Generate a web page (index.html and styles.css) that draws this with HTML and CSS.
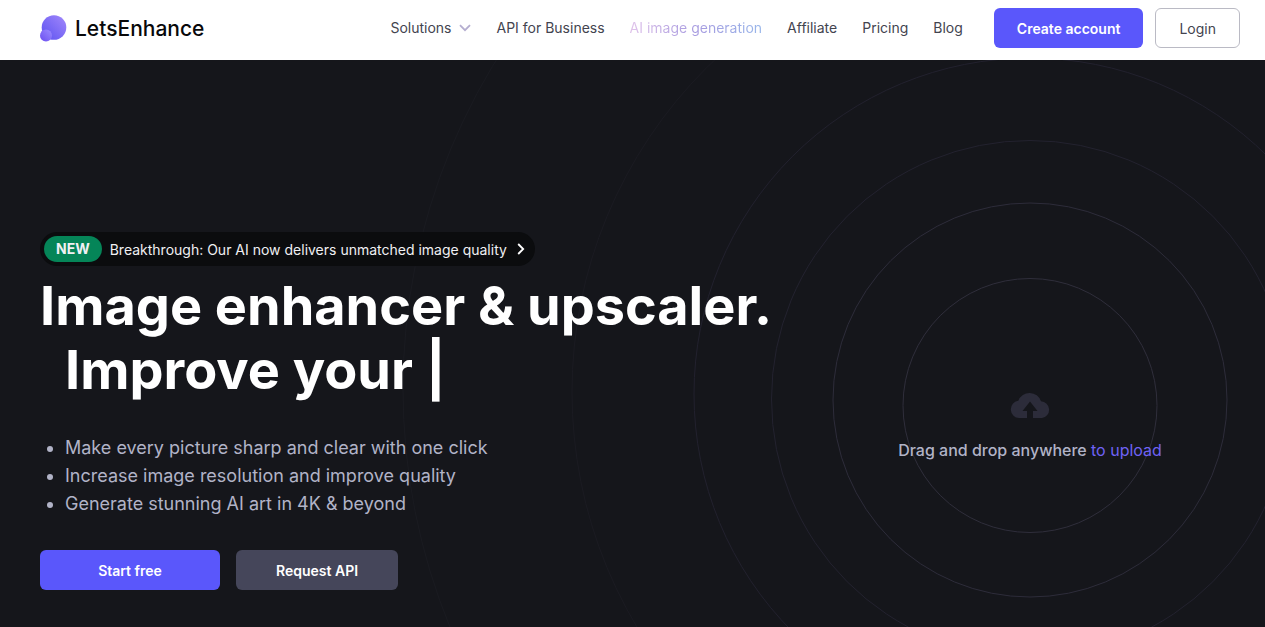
FILE: index.html
```
<!DOCTYPE html>
<html lang="en">
<head>
<meta charset="utf-8">
<meta name="viewport" content="width=device-width, initial-scale=1">
<title>LetsEnhance</title>
<link rel="stylesheet" href="styles.css">
</head>
<body>
<header class="header">
  <a class="logo" href="#">
    <svg class="logo-mark" viewBox="0 0 27 27" aria-hidden="true">
      <defs>
        <linearGradient id="big" x1="0" y1="1" x2="1" y2="0"><stop offset="0" stop-color="#5a50f0"/><stop offset="1" stop-color="#a389fb"/></linearGradient>
        <linearGradient id="small" x1="0" y1="1" x2="1" y2="0"><stop offset="0" stop-color="#6a4df0"/><stop offset="1" stop-color="#9b8cff"/></linearGradient>
      </defs>
      <circle cx="14" cy="12.5" r="12.3" fill="url(#big)"/>
      <circle cx="6" cy="20.5" r="6" fill="url(#small)"/>
    </svg>
    <span>LetsEnhance</span>
  </a>
  <nav class="nav">
    <button class="nav-item nav-menu" type="button">Solutions
      <svg class="chevron" viewBox="0 0 12 8" aria-hidden="true"><path d="M1 1.2l5 5 5-5" fill="none" stroke="#b5aed0" stroke-width="1.8"/></svg>
    </button>
    <a class="nav-item" href="#">API for Business</a>
    <a class="nav-item nav-gradient" href="#">AI image generation</a>
    <a class="nav-item" href="#">Affiliate</a>
    <a class="nav-item" href="#">Pricing</a>
    <a class="nav-item" href="#">Blog</a>
  </nav>
  <div class="account">
    <button class="button primary create" type="button">Create account</button>
    <button class="button outline" type="button">Login</button>
  </div>
</header>
<main class="hero">
  <section class="intro">
    <a class="news" href="#">
      <span class="tag">NEW</span>
      <span>Breakthrough: Our AI now delivers unmatched image quality</span>
      <svg class="news-arrow" viewBox="0 0 8 12" aria-hidden="true"><path d="M1.2 1l5 5-5 5" fill="none" stroke="#fff" stroke-width="1.8"/></svg>
    </a>
    <h1 class="title">Image enhancer &amp; upscaler.<span class="typed">Improve your <span class="cursor">|</span></span></h1>
    <ul class="benefits">
      <li>Make every picture sharp and clear with one click</li>
      <li>Increase image resolution and improve quality</li>
      <li>Generate stunning AI art in 4K &amp; beyond</li>
    </ul>
    <div class="actions">
      <button class="button primary start" type="button">Start free</button>
      <button class="button muted" type="button">Request API</button>
    </div>
  </section>
  <section class="drop">
    <svg class="rings" viewBox="-640 -640 1280 1280" aria-hidden="true">
      <g fill="none">
        <circle cy="5.500" r="127" stroke="#2f2e3b"/>
        <circle cy="0" r="197" stroke="#2d2c3a"/>
        <circle cy="-1" r="258.5" stroke="#23222f"/>
        <circle cy="-6" r="336" stroke="#22212e"/>
        <circle cy="-8" r="458" stroke="#1b1b22"/>
        <circle cy="-11" r="627" stroke="#1a1b21"/>
      </g>
    </svg>
    <svg class="cloud" viewBox="0 0 40 26" aria-hidden="true"><path d="M17 26H9A8.7 8.7 0 0 1 8.300 8.700A12 12 0 0 1 31 9.300A8.400 8.400 0 0 1 32 26H23V19h4.500L20 9.500 12.500 19H17z" fill="#2c2c3a"/></svg>
    <p class="drop-text">Drag and drop anywhere <a href="#">to upload</a></p>
  </section>
</main>
</body>
</html>
```
FILE: styles.css
```
* { box-sizing: border-box; }
body {
  margin: 0;
  min-height: 100vh;
  display: flex;
  flex-direction: column;
  background: #15161b;
  font-family: Inter, "Liberation Sans", sans-serif;
  font-size: 14px;
}
a { color: inherit; text-decoration: none; }
button { font: inherit; cursor: pointer; }
.header {
  display: flex;
  align-items: center;
  height: 60px;
  padding: 0 25px 4px 40px;
  background: #fff;
}
.logo {
  display: flex;
  align-items: center;
  gap: 8px;
  margin-right: auto;
  color: #08080a;
  font-size: 21px;
  font-weight: 500;
}
.logo-mark { width: 27px; height: 27px; }
.nav { display: flex; align-items: center; gap: 25px; }
.nav-item { color: #43444f; line-height: 20px; white-space: nowrap; }
.nav-menu {
  display: flex;
  align-items: center;
  gap: 8px;
  padding: 0;
  border: 0;
  background: none;
}
.chevron { width: 12px; height: 8px; }
.nav-gradient {
  background: linear-gradient(90deg, #e0c3ea, #a79be0 50%, #98b6ea);
  background-clip: text;
  color: transparent;
}
.account { display: flex; gap: 12px; margin-left: 31px; }
.button {
  height: 40px;
  padding: 0 23px;
  border: 0;
  border-radius: 6px;
  color: #fff;
  font-weight: 600;
  white-space: nowrap;
}
.primary { background: #5a57fb; }
.muted { background: #45465a; padding: 0 40px; }
.outline {
  border: 1px solid #babac4;
  background: #fff;
  color: #43444f;
  font-weight: 400;
}
.start { width: 180px; }
.hero {
  flex: 1;
  display: grid;
  grid-template-columns: 1fr 390px;
  padding: 0 40px;
  position: relative;
  overflow: hidden;
}
.intro { position: relative; z-index: 1; padding: 172px 0 36px; }
.news {
  display: inline-flex;
  align-items: center;
  gap: 8px;
  height: 34px;
  padding: 0 10px 0 4px;
  border-radius: 17px;
  background: #0b0c0e;
  color: #f0f0f3;
}
.tag {
  padding: 0 12px;
  border-radius: 13px;
  background: #058558;
  line-height: 26px;
  font-weight: 700;
}
.news-arrow { width: 8px; height: 12px; margin-left: 2px; }
.title {
  margin: 8px 0 32px;
  color: #fff;
  font-size: 54px;
  line-height: 64px;
  font-weight: 700;
  white-space: nowrap;
}
.typed { display: block; padding-left: 25px; }
.benefits {
  margin: 0;
  padding-left: 25px;
  color: #b1b3c7;
  font-size: 18px;
  line-height: 28px;
}
.actions { display: flex; gap: 16px; margin-top: 32px; }
.drop {
  position: relative;
  display: flex;
  flex-direction: column;
  align-items: center;
  padding-top: 332px;
}
.rings {
  position: absolute;
  top: -300px;
  left: 50%;
  width: 1280px;
  height: 1280px;
  transform: translateX(-50%);
}
.cloud { position: relative; width: 40px; height: 26px; }
.drop-text {
  position: relative;
  margin: 20px 0 0;
  color: #b1b3c7;
  font-size: 16px;
  line-height: 24px;
  font-weight: 500;
  white-space: nowrap;
}
.drop-text a { color: #6f62f5; font-weight: 400; }
```
